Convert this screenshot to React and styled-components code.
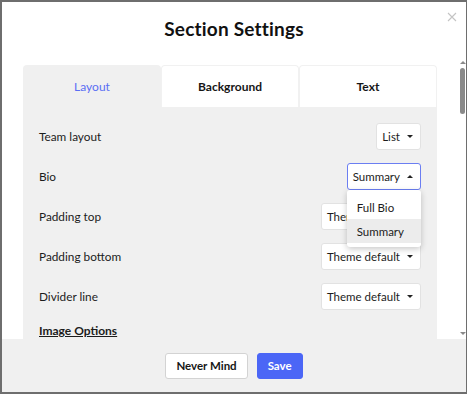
import React from "react";
import styled, { createGlobalStyle } from "styled-components";

const GlobalStyle = createGlobalStyle`
  html, body { margin: 0; padding: 0; }
  body {
    background: #6e6e6e;
    font-family: "Lato", "Noto Sans", sans-serif;
    color: #1c1c1c;
  }
  * { box-sizing: border-box; }
`;

const Overlay = styled.div`
  width: 467px;
  height: 394px;
  padding: 2px 1px 2px 2px;
  display: flex;
`;

const Modal = styled.div`
  flex: 1;
  min-height: 0;
  background: #fff;
  display: flex;
  flex-direction: column;
  position: relative;
  overflow: hidden;
`;

const Header = styled.div`
  height: 55px;
  flex: none;
  display: flex;
  align-items: center;
  justify-content: center;
  padding-bottom: 3px;
`;

const Title = styled.h1`
  margin: 0;
  font-size: 19px;
  font-weight: 700;
  color: #111;
  letter-spacing: 0.2px;
`;

const Close = styled.button`
  position: absolute;
  top: 9px;
  right: 8px;
  width: 12px;
  height: 12px;
  padding: 0;
  border: 0;
  background: none;
  display: flex;
  align-items: center;
  justify-content: center;
`;

const Main = styled.div`
  flex: 1;
  min-height: 0;
  display: flex;
`;

const Content = styled.div`
  flex: 1;
  min-width: 0;
  overflow: hidden;
  padding: 8px 21px 0 21px;
`;

const ScrollBar = styled.div`
  width: 8px;
  flex: none;
  display: flex;
  flex-direction: column;
  align-items: center;
  padding: 2px 0 2px 1px;
  background: #fff;
`;

const Arrow = styled.span`
  flex: none;
  width: 0;
  height: 0;
  margin: 2px 0;
  border-left: 3px solid transparent;
  border-right: 3px solid transparent;
  ${(p) =>
    p.$up
      ? "border-bottom: 3px solid #8a8a8a;"
      : "border-top: 3px solid #8a8a8a;"}
`;

const Track = styled.div`
  flex: 1;
  width: 100%;
  display: flex;
  justify-content: center;
  padding-top: 2px;
`;

const Thumb = styled.div`
  width: 5px;
  height: 46px;
  border-radius: 3px;
  background: #8a8a8a;
`;

const Tabs = styled.div`
  display: grid;
  grid-template-columns: 138px 1fr 1fr;
  height: 42px;
`;

const Tab = styled.div`
  display: flex;
  align-items: center;
  justify-content: center;
  font-size: 12px;
  font-weight: ${(p) => (p.$active ? 400 : 700)};
  color: ${(p) => (p.$active ? "#5a6ef4" : "#161616")};
  background: ${(p) => (p.$active ? "#f0f0f0" : "#fff")};
  border: ${(p) => (p.$active ? "none" : "1px solid #f1f1f1")};
  border-bottom: none;
  border-radius: 4px 4px 0 0;
`;

const Panel = styled.div`
  background: #f0f0f0;
  padding: 16px 16px 0 16px;
  min-height: 1560px;
  display: flex;
  flex-direction: column;
  gap: 13px;
`;

const Row = styled.div`
  display: flex;
  align-items: center;
  justify-content: space-between;
  height: 27px;
`;

const Label = styled.span`
  font-size: 11.8px;
  color: #1c1c1c;
`;

const SelectWrap = styled.div`
  position: relative;
`;

const Select = styled.div`
  height: 27px;
  display: flex;
  align-items: center;
  gap: 7px;
  padding: 0 7px 0 5px;
  background: #fff;
  border: 1px solid ${(p) => (p.$open ? "#6b7ef2" : "#e2e2e2")};
  border-radius: 3px;
  font-size: 11.5px;
  color: #1c1c1c;
  white-space: nowrap;
`;

const Caret = styled.span`
  width: 0;
  height: 0;
  border-left: 3px solid transparent;
  border-right: 3px solid transparent;
  ${(p) =>
    p.$up
      ? "border-bottom: 3.5px solid #222;"
      : "border-top: 3.5px solid #222;"}
`;

const Menu = styled.div`
  position: absolute;
  top: 100%;
  left: 0;
  right: 0;
  background: #fff;
  border-radius: 3px;
  box-shadow: 0 2px 6px rgba(0, 0, 0, 0.22);
  padding: 5px 0 4px;
  z-index: 5;
`;

const Option = styled.div`
  height: 24px;
  display: flex;
  align-items: center;
  padding-left: 10px;
  font-size: 11.5px;
  color: #1c1c1c;
  background: ${(p) => (p.$selected ? "#ececec" : "#fff")};
`;

const LinkRow = styled.div`
  margin-top: -4px;
`;

const LinkText = styled.a`
  font-size: 12px;
  font-weight: 700;
  color: #1c1c1c;
  text-decoration: underline;
`;

const Footer = styled.div`
  height: 53px;
  flex: none;
  background: #f0f0f0;
  display: flex;
  align-items: center;
  justify-content: center;
  gap: 9px;
`;

const Button = styled.button`
  height: 26px;
  padding: 0 10px;
  border-radius: 3px;
  font-family: inherit;
  font-size: 11.5px;
  font-weight: 700;
  border: 1px solid ${(p) => (p.$primary ? "#4b66f6" : "#d3d3d3")};
  background: ${(p) => (p.$primary ? "#4b66f6" : "#fff")};
  color: ${(p) => (p.$primary ? "#fff" : "#161616")};
`;

function Field({ label, value, open, options }) {
  return (
    <Row>
      <Label>{label}</Label>
      <SelectWrap>
        <Select $open={open}>
          {value}
          <Caret $up={open} />
        </Select>
        {open && (
          <Menu>
            {options.map((o) => (
              <Option key={o} $selected={o === value}>
                {o}
              </Option>
            ))}
          </Menu>
        )}
      </SelectWrap>
    </Row>
  );
}

export default function App() {
  return (
    <>
      <GlobalStyle />
      <Overlay>
        <Modal>
          <Header>
            <Title>Section Settings</Title>
          </Header>
          <Close aria-label="Close">
            <svg width="10" height="10" viewBox="0 0 10 10">
              <path d="M1 1 L9 9 M9 1 L1 9" stroke="#c4c4c4" strokeWidth="1.1" />
            </svg>
          </Close>
          <Main>
            <Content>
              <Tabs>
                <Tab $active>Layout</Tab>
                <Tab>Background</Tab>
                <Tab>Text</Tab>
              </Tabs>
              <Panel>
                <Field label="Team layout" value="List" />
                <Field
                  label="Bio"
                  value="Summary"
                  open
                  options={["Full Bio", "Summary"]}
                />
                <Field label="Padding top" value="Theme default" />
                <Field label="Padding bottom" value="Theme default" />
                <Field label="Divider line" value="Theme default" />
                <LinkRow>
                  <LinkText>Image Options</LinkText>
                </LinkRow>
              </Panel>
            </Content>
            <ScrollBar>
              <Arrow $up />
              <Track>
                <Thumb />
              </Track>
              <Arrow />
            </ScrollBar>
          </Main>
          <Footer>
            <Button>Never Mind</Button>
            <Button $primary>Save</Button>
          </Footer>
        </Modal>
      </Overlay>
    </>
  );
}
